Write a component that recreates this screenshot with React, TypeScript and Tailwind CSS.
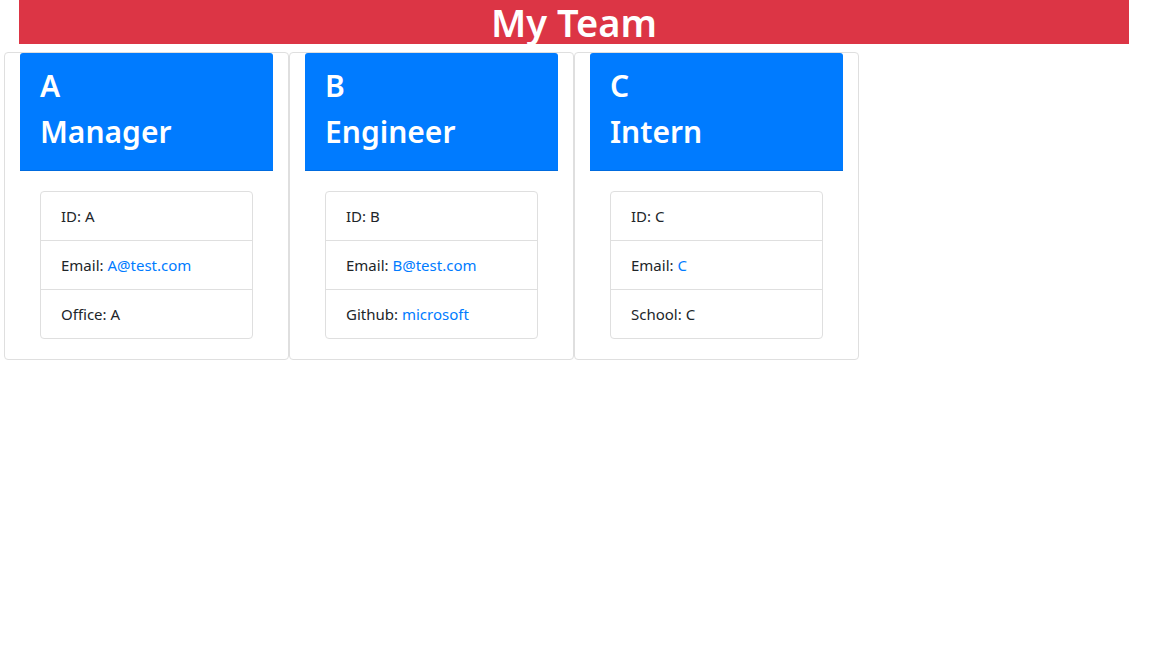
import React from "react";

type Member = {
  name: string;
  role: string;
  id: string;
  email: string;
  emailHref: string;
  extraLabel: string;
  extraValue: string;
  extraLink?: boolean;
};

const members: Member[] = [
  { name: "A", role: "Manager", id: "A", email: "A@test.com", emailHref: "mailto:A@test.com", extraLabel: "Office", extraValue: "A" },
  { name: "B", role: "Engineer", id: "B", email: "B@test.com", emailHref: "mailto:B@test.com", extraLabel: "Github", extraValue: "microsoft", extraLink: true },
  { name: "C", role: "Intern", id: "C", email: "C", emailHref: "mailto:C", extraLabel: "School", extraValue: "C" },
];

function Card({ m }: { m: Member }) {
  return (
    <div className="w-[285px] border border-[#dfdfdf] rounded-[4px] px-[15px] bg-white">
      <div className="bg-[#007bff] text-white rounded-t-[3px] border-b border-[rgba(0,0,0,0.125)] px-[20px] pt-[14px] pb-[11px]">
        <h2 className="text-[30px] leading-[38px] font-semibold mb-[8px]">{m.name}</h2>
        <h2 className="text-[30px] leading-[38px] font-semibold mb-[8px]">{m.role}</h2>
      </div>
      <div className="p-[20px]">
        <ul className="border border-[#dfdfdf] rounded-[4px] text-[15px] text-[#212529]">
          <li className="h-[49px] flex items-center px-[20px] border-b border-[#dfdfdf]">ID: {m.id}</li>
          <li className="h-[49px] flex items-center px-[20px] border-b border-[#dfdfdf]">
            Email:&nbsp;<a href={m.emailHref} className="text-[#007bff]">{m.email}</a>
          </li>
          <li className="h-[48px] flex items-center px-[20px]">
            {m.extraLabel}:&nbsp;
            {m.extraLink ? <a href="#" className="text-[#007bff]">{m.extraValue}</a> : m.extraValue}
          </li>
        </ul>
      </div>
    </div>
  );
}

export default function App() {
  return (
    <div className="min-h-screen bg-white" style={{ fontFamily: '"Noto Sans", "Open Sans", sans-serif' }}>
      <div className="ml-[19px] w-[1110px] h-[44px] bg-[#dc3545] flex justify-center items-center">
        <h1 className="text-[38px] leading-[44px] font-semibold text-white">My Team</h1>
      </div>
      <div className="flex pl-[4px] mt-[8px]">
        {members.map((m) => (
          <Card key={m.name} m={m} />
        ))}
      </div>
    </div>
  );
}
